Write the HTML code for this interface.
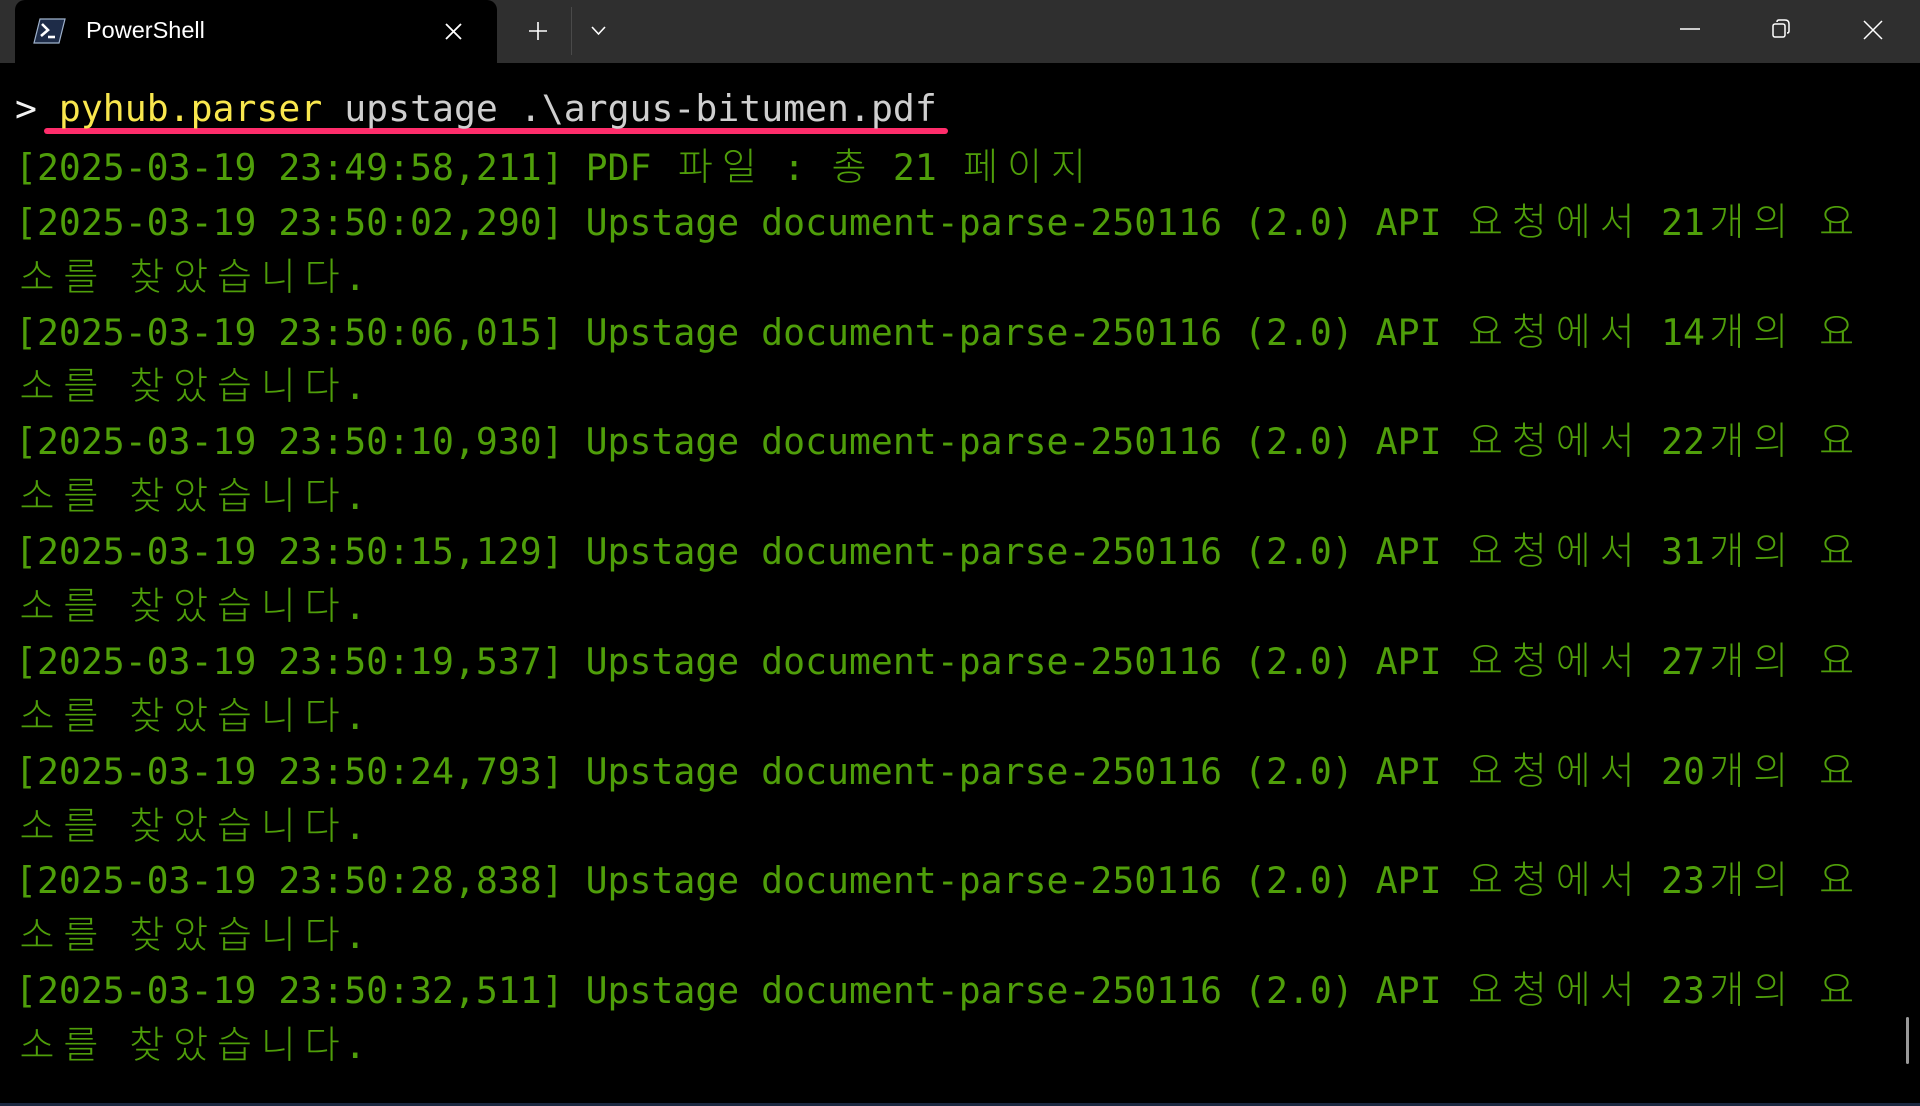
<!DOCTYPE html>
<html><head><meta charset="utf-8"><style>
*{margin:0;padding:0;box-sizing:border-box}
body{width:1920px;height:1106px;background:#000;overflow:hidden;position:relative;font-family:"DejaVu Sans Mono","Liberation Mono",monospace}
#bar{position:absolute;left:0;top:0;width:1920px;height:63px;background:#2f2f2f}
#tab{position:absolute;left:15px;top:0;width:482px;height:63px;background:#000;border-radius:10px 10px 0 0}
#tabtitle{position:absolute;left:86px;top:17px;font:23.5px "Liberation Sans",sans-serif;color:#fff}
svg{position:absolute}
#term{position:absolute;left:15px;top:82px;font-size:36.46px;line-height:54.9px;color:#4f9e0a;white-space:pre}
#term div{height:54.9px}
b{font-weight:normal;display:inline-block;width:43.9px;text-align:center;font-family:"Noto Sans CJK KR","NanumGothic",sans-serif;font-size:38px;font-weight:300}
.y{color:#f9e74e}.w{color:#cfcfcf}.p{color:#f2f2f2}
#ul{position:absolute;left:44px;top:128px;width:904px;height:6px;background:#ff2d6b;border-radius:3px}
#sb{position:absolute;left:1906px;top:1017px;width:3px;height:47px;background:#9a9a9a;border-radius:2px}
#bot{position:absolute;left:0;top:1103px;width:1920px;height:3px;background:#1b2740}
</style></head><body>
<div id="bar"></div>
<div id="tab"></div>
<svg style="left:33px;top:18px" width="33" height="26" viewBox="0 0 33 26"><path d="M7 1H32L26 25H1Z" fill="#1e2c48" stroke="#9fb2cc" stroke-width="1.2"/><path d="M9 6L15 12L8 18" fill="none" stroke="#fff" stroke-width="2.6"/><path d="M15 19H22" stroke="#fff" stroke-width="2.6"/></svg>
<div id="tabtitle">PowerShell</div>
<svg style="left:445px;top:23px" width="17" height="17"><path d="M1 1L16 16M16 1L1 16" stroke="#fff" stroke-width="1.8"/></svg>
<svg style="left:529px;top:22px" width="18" height="18"><path d="M9 0V18M0 9H18" stroke="#fff" stroke-width="1.6"/></svg>
<div style="position:absolute;left:571px;top:7px;width:1px;height:48px;background:#4a4a4a"></div>
<svg style="left:591px;top:26px" width="15" height="10"><path d="M1 1L7.5 8L14 1" fill="none" stroke="#fff" stroke-width="1.6"/></svg>
<svg style="left:1680px;top:24px" width="20" height="10"><path d="M0 5H20" stroke="#fff" stroke-width="1.5"/></svg>
<svg style="left:1771px;top:19px" width="22" height="22"><rect x="2" y="5" width="12" height="13" rx="2" fill="none" stroke="#fff" stroke-width="1.5"/><path d="M6 3Q6 1 8 1H14Q18 1 18 5V12Q18 14 16 14" fill="none" stroke="#fff" stroke-width="1.5"/></svg>
<svg style="left:1863px;top:20px" width="20" height="20"><path d="M1 1L19 19M19 1L1 19" stroke="#fff" stroke-width="1.5"/></svg>
<div id="ul"></div>
<div id="term"><div><span class="p">&gt; </span><span class="y">pyhub.parser</span><span class="w"> upstage .\argus-bitumen.pdf</span></div><div>[2025-03-19 23:49:58,211] PDF <b>파</b><b>일</b> : <b>총</b> 21 <b>페</b><b>이</b><b>지</b></div><div>[2025-03-19 23:50:02,290] Upstage document-parse-250116 (2.0) API <b>요</b><b>청</b><b>에</b><b>서</b> 21<b>개</b><b>의</b> <b>요</b></div><div><b>소</b><b>를</b> <b>찾</b><b>았</b><b>습</b><b>니</b><b>다</b>.</div><div>[2025-03-19 23:50:06,015] Upstage document-parse-250116 (2.0) API <b>요</b><b>청</b><b>에</b><b>서</b> 14<b>개</b><b>의</b> <b>요</b></div><div><b>소</b><b>를</b> <b>찾</b><b>았</b><b>습</b><b>니</b><b>다</b>.</div><div>[2025-03-19 23:50:10,930] Upstage document-parse-250116 (2.0) API <b>요</b><b>청</b><b>에</b><b>서</b> 22<b>개</b><b>의</b> <b>요</b></div><div><b>소</b><b>를</b> <b>찾</b><b>았</b><b>습</b><b>니</b><b>다</b>.</div><div>[2025-03-19 23:50:15,129] Upstage document-parse-250116 (2.0) API <b>요</b><b>청</b><b>에</b><b>서</b> 31<b>개</b><b>의</b> <b>요</b></div><div><b>소</b><b>를</b> <b>찾</b><b>았</b><b>습</b><b>니</b><b>다</b>.</div><div>[2025-03-19 23:50:19,537] Upstage document-parse-250116 (2.0) API <b>요</b><b>청</b><b>에</b><b>서</b> 27<b>개</b><b>의</b> <b>요</b></div><div><b>소</b><b>를</b> <b>찾</b><b>았</b><b>습</b><b>니</b><b>다</b>.</div><div>[2025-03-19 23:50:24,793] Upstage document-parse-250116 (2.0) API <b>요</b><b>청</b><b>에</b><b>서</b> 20<b>개</b><b>의</b> <b>요</b></div><div><b>소</b><b>를</b> <b>찾</b><b>았</b><b>습</b><b>니</b><b>다</b>.</div><div>[2025-03-19 23:50:28,838] Upstage document-parse-250116 (2.0) API <b>요</b><b>청</b><b>에</b><b>서</b> 23<b>개</b><b>의</b> <b>요</b></div><div><b>소</b><b>를</b> <b>찾</b><b>았</b><b>습</b><b>니</b><b>다</b>.</div><div>[2025-03-19 23:50:32,511] Upstage document-parse-250116 (2.0) API <b>요</b><b>청</b><b>에</b><b>서</b> 23<b>개</b><b>의</b> <b>요</b></div><div><b>소</b><b>를</b> <b>찾</b><b>았</b><b>습</b><b>니</b><b>다</b>.</div></div>
<div id="sb"></div>
<div id="bot"></div>
</body></html>
